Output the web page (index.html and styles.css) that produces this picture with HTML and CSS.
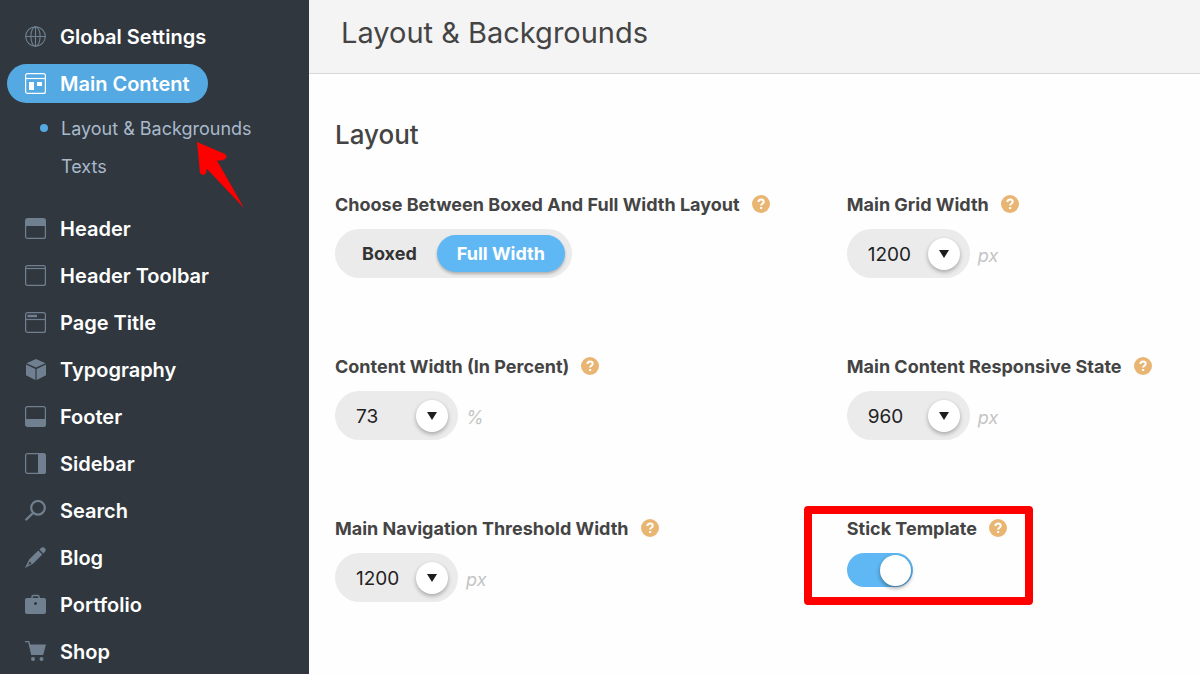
FILE: index.html
```html
<!DOCTYPE html>
<html lang="en">
  <head>
    <meta charset="UTF-8" />
    <meta name="viewport" content="width=device-width, initial-scale=1.0" />
    <title>Layout &amp; Backgrounds | Main Content</title>
    <link rel="stylesheet" href="styles.css">
  </head>

  <body>
    <!-- shared help and caret icons -->
    <svg class="symbols" width="0" height="0" aria-hidden="true">
      <symbol id="help" viewBox="0 0 18 18">
        <circle cx="9" cy="9" r="9" fill="#e8b572" />
        <path d="M6.4 7.1c0-1.6 1.1-2.6 2.7-2.6s2.6.9 2.6 2.3c0 1.9-2.6 2-2.6 3.8" fill="none" stroke="#fff" stroke-width="2" />
        <rect x="8" y="11.9" width="2.2" height="2.2" rx=".5" fill="#fff" />
      </symbol>
      <symbol id="caret" viewBox="0 0 10 8">
        <path d="M0 0h10L5 8z" fill="#1d1d1d" />
      </symbol>
    </svg>

    <aside class="sidebar">
      <nav>
        <ul class="menu">
          <li>
            <a href="#" class="menu-link">
              <svg class="icon" viewBox="0 0 21 21" fill="none" stroke="currentColor" stroke-width="1.1">
                <circle cx="10.5" cy="10.5" r="9.8" />
                <ellipse cx="10.5" cy="10.5" rx="4.6" ry="9.8" />
                <path d="M10.5.7v19.6M.7 10.5h19.6" />
              </svg>
              Global Settings
            </a>
          </li>
          <li>
            <a href="#" class="menu-link active">
              <svg class="icon" viewBox="0 0 21 21">
                <rect x=".6" y=".6" width="19.8" height="19.8" rx="2" fill="none" stroke="currentColor" stroke-width="1.2" />
                <path d="M1 5.5h19" stroke="currentColor" stroke-width="1.2" />
                <path d="M4 9h5v8H4zM12 9h5v4h-5z" fill="currentColor" />
              </svg>
              Main Content
            </a>
            <ul class="submenu">
              <li><a href="#" class="submenu-link current">Layout &amp; Backgrounds</a></li>
              <li><a href="#" class="submenu-link">Texts</a></li>
            </ul>
          </li>
          <li>
            <a href="#" class="menu-link">
              <svg class="icon" viewBox="0 0 21 21">
                <rect x=".6" y=".6" width="19.8" height="19.8" rx="2" fill="none" stroke="currentColor" stroke-width="1.2" />
                <path d="M1 1h19v7H1z" fill="currentColor" />
              </svg>
              Header
            </a>
          </li>
          <li>
            <a href="#" class="menu-link">
              <svg class="icon" viewBox="0 0 21 21" fill="none" stroke="currentColor" stroke-width="1.2">
                <rect x=".6" y=".6" width="19.8" height="19.8" rx="2" />
                <path d="M1 3.5h19" />
              </svg>
              Header Toolbar
            </a>
          </li>
          <li>
            <a href="#" class="menu-link">
              <svg class="icon" viewBox="0 0 21 21" fill="none" stroke="currentColor" stroke-width="1.2">
                <rect x=".6" y=".6" width="19.8" height="19.8" rx="2" />
                <path d="M1 7.5h19" />
                <path d="M2.5 4H12" stroke-width="2.5" />
              </svg>
              Page Title
            </a>
          </li>
          <li>
            <a href="#" class="menu-link">
              <svg class="icon" viewBox="0 0 21 21" fill="currentColor">
                <path d="M11 0l9.5 4.3L11 8.6 1.5 4.3zM1 5.6l9.4 4.3v11L1 16.2zM21 5.6l-9.4 4.3v11L21 16.2z" />
              </svg>
              Typography
            </a>
          </li>
          <li>
            <a href="#" class="menu-link">
              <svg class="icon" viewBox="0 0 21 21">
                <rect x=".6" y=".6" width="19.8" height="19.8" rx="2" fill="none" stroke="currentColor" stroke-width="1.2" />
                <path d="M1 13h19v7H1z" fill="currentColor" />
              </svg>
              Footer
            </a>
          </li>
          <li>
            <a href="#" class="menu-link">
              <svg class="icon" viewBox="0 0 21 21">
                <rect x=".6" y=".6" width="19.8" height="19.8" rx="2" fill="none" stroke="currentColor" stroke-width="1.2" />
                <path d="M13 1h7v19h-7z" fill="currentColor" />
              </svg>
              Sidebar
            </a>
          </li>
          <li>
            <a href="#" class="menu-link">
              <svg class="icon" viewBox="0 0 21 21" fill="none" stroke="currentColor">
                <circle cx="13" cy="7.8" r="6.8" stroke-width="2.2" />
                <path d="M8 13l-6.7 6.5" stroke-width="2.4" stroke-linecap="round" />
              </svg>
              Search
            </a>
          </li>
          <li>
            <a href="#" class="menu-link">
              <svg class="icon" viewBox="0 0 21 21" fill="currentColor">
                <path d="M15.5 1.6c1.5-1.7 3-1.8 4.3-.5s1.2 2.8-.4 4.3l-1.1 1-3.9-3.8z" />
                <path fill-rule="evenodd" d="M13.3 3.6l4 4L8 16.8 0 21l4.1-8.4zM4.8 14.6l-1.7 3.5 3.5-1.7z" />
              </svg>
              Blog
            </a>
          </li>
          <li>
            <a href="#" class="menu-link">
              <svg class="icon" viewBox="0 0 21 21">
                <path d="M7 5V3Q7 1.500 8.500 1.500h4Q14 1.500 14 3V5" fill="none" stroke="currentColor" stroke-width="1.5" />
                <path fill-rule="evenodd" d="M2 4h17q2 0 2 2V18q0 2-2 2H2q-2 0-2-2V6q0-2 2-2zM10.5 8a1.5 1.5 0 1 0 .01 0z" fill="currentColor" />
              </svg>
              Portfolio
            </a>
          </li>
          <li>
            <a href="#" class="menu-link">
              <svg class="icon" viewBox="0 0 21 21" fill="currentColor">
                <path d="M0 0h4.2L5.3 3.5H21L18.2 14H6.2L3.2 1.3H0z" />
                <circle cx="8" cy="18" r="2" />
                <circle cx="16.5" cy="18" r="2" />
              </svg>
              Shop
            </a>
          </li>
        </ul>
      </nav>
      <svg class="pointer" viewBox="0 0 50 68" aria-hidden="true">
        <path d="M1 1L29 13Q32 16 29 18Q27 20 21 19.500L48 67 11 28 10 32Q7 36 4 32z" fill="#f00" />
      </svg>
    </aside>

    <main class="content">
      <header class="page-header">
        <h1>Layout &amp; Backgrounds</h1>
      </header>

      <section class="settings">
        <h2>Layout</h2>
        <div class="fields">
          <fieldset class="field">
            <legend class="field-title">
              Choose Between Boxed And Full Width Layout
              <svg class="help"><use href="#help" /></svg>
            </legend>
            <div class="segment">
              <label><input type="radio" name="layout" /><span>Boxed</span></label>
              <label><input type="radio" name="layout" checked /><span>Full Width</span></label>
            </div>
          </fieldset>

          <div class="field">
            <label class="field-title" for="grid-width">
              Main Grid Width
              <svg class="help"><use href="#help" /></svg>
            </label>
            <div class="control">
              <div class="combo">
                <input type="text" id="grid-width" value="1200" />
                <button type="button" aria-label="Choose grid width"><svg class="caret"><use href="#caret" /></svg></button>
              </div>
              <span class="unit">px</span>
            </div>
          </div>

          <div class="field">
            <label class="field-title" for="content-width">
              Content Width (In Percent)
              <svg class="help"><use href="#help" /></svg>
            </label>
            <div class="control">
              <div class="combo">
                <input type="text" id="content-width" value="73" />
                <button type="button" aria-label="Choose content width"><svg class="caret"><use href="#caret" /></svg></button>
              </div>
              <span class="unit">%</span>
            </div>
          </div>

          <div class="field">
            <label class="field-title" for="responsive-state">
              Main Content Responsive State
              <svg class="help"><use href="#help" /></svg>
            </label>
            <div class="control">
              <div class="combo">
                <input type="text" id="responsive-state" value="960" />
                <button type="button" aria-label="Choose responsive state"><svg class="caret"><use href="#caret" /></svg></button>
              </div>
              <span class="unit">px</span>
            </div>
          </div>

          <div class="field">
            <label class="field-title" for="nav-threshold">
              Main Navigation Threshold Width
              <svg class="help"><use href="#help" /></svg>
            </label>
            <div class="control">
              <div class="combo">
                <input type="text" id="nav-threshold" value="1200" />
                <button type="button" aria-label="Choose threshold width"><svg class="caret"><use href="#caret" /></svg></button>
              </div>
              <span class="unit">px</span>
            </div>
          </div>

          <div class="field highlighted">
            <label class="field-title" for="stick-template">
              Stick Template
              <svg class="help"><use href="#help" /></svg>
            </label>
            <input type="checkbox" class="switch" id="stick-template" checked />
          </div>
        </div>
      </section>
    </main>
  </body>
</html>
```
FILE: styles.css
```css
*,
*::before,
*::after {
  padding: 0;
  margin: 0;
  box-sizing: border-box;
}

body {
  display: flex;
  min-height: 100vh;
  background: #fefefe;
  color: #444;
  font-family: Inter, "Liberation Sans", sans-serif;
}

ul {
  list-style: none;
}

a {
  text-decoration: none;
}

.symbols {
  position: absolute;
}

/* sidebar */
.sidebar {
  position: relative;
  flex: 0 0 309px;
  padding: 17px 7px 0;
  background: #30373e;
}

.menu > li {
  margin-bottom: 8px;
}

.menu-link {
  display: inline-flex;
  align-items: center;
  gap: 14px;
  height: 39px;
  padding: 0 18px;
  border-radius: 20px;
  color: #fff;
  font-size: 20px;
  font-weight: 600;
  vertical-align: top;
}

.icon {
  width: 21px;
  height: 21px;
  color: #708090;
}

.menu-link.active {
  background: #54a9e2;
}

.active .icon {
  color: #fff;
}

.submenu {
  padding: 6px 0 16px;
}

.submenu-link {
  display: flex;
  align-items: center;
  height: 38px;
  padding-left: 54px;
  color: #a9b9cc;
  font-size: 18px;
}

.submenu-link.current {
  gap: 13px;
  padding-left: 33px;
}

.submenu-link.current::before {
  content: "";
  width: 8px;
  height: 8px;
  border-radius: 50%;
  background: #54a9e2;
}

.pointer {
  position: absolute;
  left: 196px;
  top: 141px;
  width: 50px;
  height: 68px;
}

/* content */
.content {
  flex: 1;
  min-width: 0;
}

.page-header {
  display: flex;
  align-items: center;
  height: 74px;
  padding: 0 32px 8px;
  border-bottom: 1px solid #d8d8d8;
  background: #f4f4f4;
}

h1 {
  font-size: 29px;
  font-weight: 400;
}

.settings {
  padding: 44px 26px;
}

h2 {
  font-size: 26px;
  font-weight: 500;
  line-height: 34px;
}

.fields {
  display: grid;
  grid-template-columns: 61% 39%;
  grid-auto-rows: 122px;
  row-gap: 40px;
  margin-top: 40px;
}

.field {
  position: relative;
  border: 0;
}

.field-title {
  display: flex;
  align-items: center;
  gap: 12px;
  height: 24px;
  margin-bottom: 13px;
  font-size: 18px;
  font-weight: 700;
  white-space: nowrap;
}

.help {
  width: 18px;
  height: 18px;
}

.segment {
  display: inline-flex;
  padding: 6px 7px;
  border-radius: 25px;
  background: #ebebeb;
  font-size: 18px;
  font-weight: 700;
}

.segment input {
  position: absolute;
  opacity: 0;
}

.segment span {
  display: block;
  padding: 0 20px;
  border-radius: 19px;
  color: #333;
  line-height: 37px;
}

.segment input:checked + span {
  background: #5fb8f3;
  box-shadow: 0 2px 3px rgba(0, 0, 0, 0.25);
  color: #fff;
}

.control {
  display: flex;
  align-items: center;
  gap: 8px;
}

.combo {
  display: flex;
  align-items: center;
  width: 123px;
  height: 49px;
  padding: 0 10px 0 21px;
  border-radius: 25px;
  background: #ebebeb;
}

.combo input {
  flex: 1;
  min-width: 0;
  padding-top: 2px;
  border: 0;
  outline: 0;
  background: none;
  color: #222;
  font: 400 19px Inter, "Liberation Sans", sans-serif;
}

.combo button {
  display: flex;
  align-items: center;
  justify-content: center;
  width: 32px;
  height: 32px;
  border: 0;
  border-radius: 50%;
  background: #fff;
  box-shadow: 0 2px 4px rgba(0, 0, 0, 0.3);
}

.caret {
  width: 10px;
  height: 8px;
}

.unit {
  padding-top: 3px;
  color: #c4c4c4;
  font-size: 18px;
  font-style: italic;
}

.switch {
  display: flex;
  align-items: center;
  justify-content: flex-end;
  width: 66px;
  height: 34px;
  padding: 0 2px;
  border-radius: 17px;
  background: #5fb8f3;
  appearance: none;
}

.switch::before {
  content: "";
  width: 31px;
  height: 31px;
  border-radius: 50%;
  background: #fff;
  box-shadow: 0 2px 4px rgba(0, 0, 0, 0.4);
}

.switch:not(:checked) {
  justify-content: flex-start;
  background: #ccc;
}

/* red frame round the field */
.highlighted::after {
  content: "";
  position: absolute;
  left: -43px;
  top: -10px;
  width: 229px;
  height: 99px;
  border: 8px solid #f00;
  border-radius: 4px;
  pointer-events: none;
}
```
